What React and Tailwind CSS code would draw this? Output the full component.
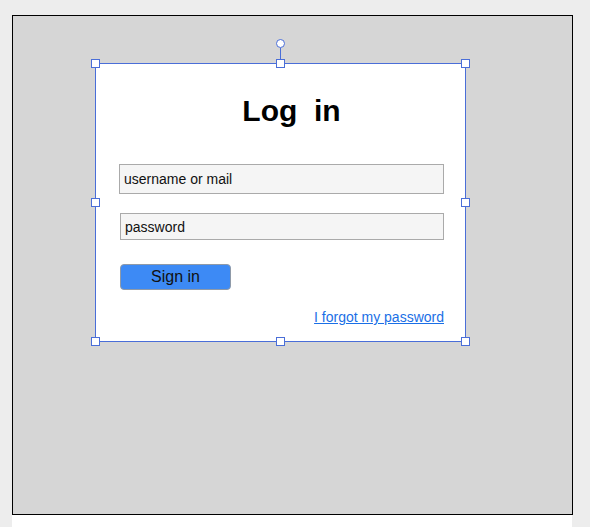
export default function App() {
  const font = { fontFamily: '"Liberation Sans", Arial, sans-serif' };
  const H = "absolute w-[9px] h-[9px] bg-white border border-[#4a6ed8]";
  return (
    <div className="w-[590px] h-[527px] bg-[#ededed] overflow-hidden" style={font}>
      <div className="ml-[12px] pt-[15px]">
        <div className="w-[561px] h-[500px] border border-black bg-[#d6d6d6] pl-[82px] pt-[47px]">
          <div className="relative w-[371px] h-[279px] bg-white border border-[#4a6ed8] flex flex-col">
            <div className="mt-[32px] pl-[22px] text-center text-[30px] leading-[30px] font-bold text-black whitespace-pre">
              Log  in
            </div>
            <div className="mt-[38px] ml-[23px] w-[325px] h-[30px] border border-[#aaaaaa] bg-[#f5f5f5] pl-[4px] flex items-center text-[14px] text-[#111]">
              username or mail
            </div>
            <div className="mt-[19px] ml-[24px] w-[324px] h-[27px] border border-[#aaaaaa] bg-[#f5f5f5] pl-[4px] pt-[1px] flex items-center text-[14px] text-[#111]">
              password
            </div>
            <div className="mt-[24px] ml-[24px] w-[111px] h-[26px] rounded-[4px] border border-[#8f9aa8] bg-[#3d8af5] flex items-center justify-center text-[16px] text-[#111]">
              Sign in
            </div>
            <div className="mt-[19px] pr-[21px] flex justify-end">
              <a className="text-[14px] leading-[16px] text-[#1a6fe6] underline">I forgot my password</a>
            </div>

            <div className={H + " left-[-5px] top-[-5px]"} />
            <div className={H + " left-[180px] top-[-5px]"} />
            <div className={H + " right-[-5px] top-[-5px]"} />
            <div className={H + " left-[-5px] top-[134px]"} />
            <div className={H + " right-[-5px] top-[134px]"} />
            <div className={H + " left-[-5px] bottom-[-5px]"} />
            <div className={H + " left-[180px] bottom-[-5px]"} />
            <div className={H + " right-[-5px] bottom-[-5px]"} />
            <div className="absolute left-[184px] top-[-16px] w-[1px] h-[11px] bg-[#4a6ed8]" />
            <div className="absolute left-[180px] top-[-25px] w-[9px] h-[9px] rounded-full bg-white border border-[#4a6ed8]" />
          </div>
        </div>
        <div className="w-[560px] h-[12px] bg-white" />
      </div>
    </div>
  );
}
